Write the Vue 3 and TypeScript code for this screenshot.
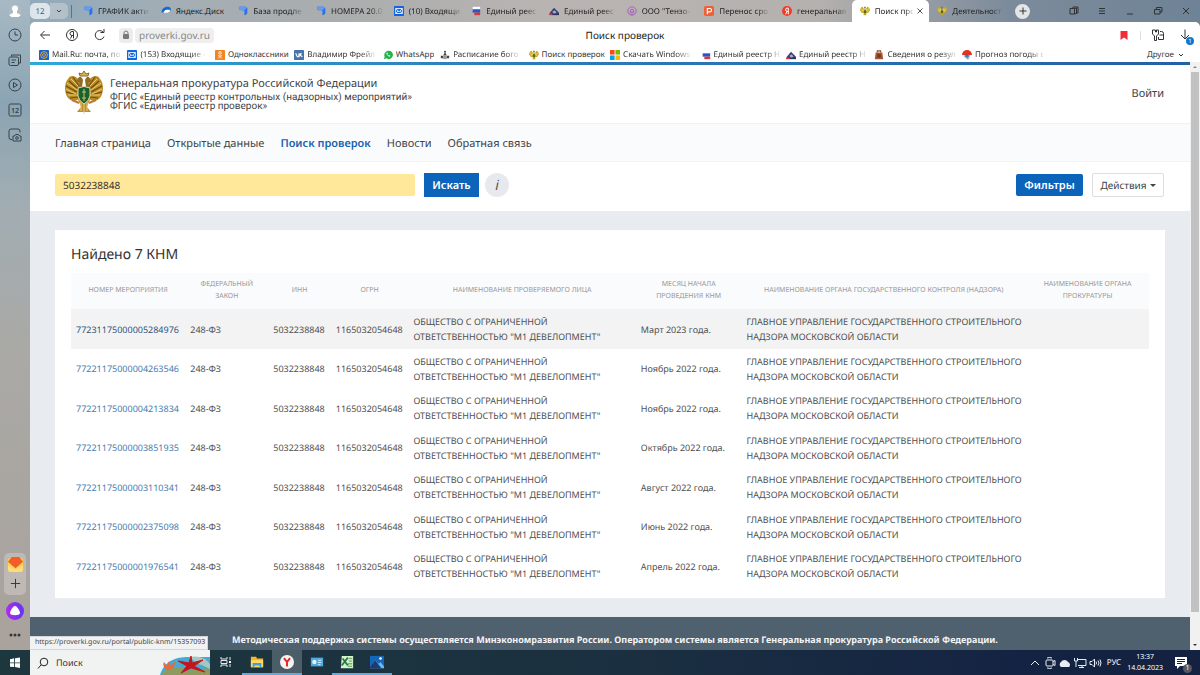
<script setup lang="ts">
import { ref } from 'vue'

interface Tab { title: string; icon: string; active?: boolean; whole?: boolean }
interface Inspection { id: string; month: string }

const tabs: Tab[] = [
  { title: 'ГРАФИК акти', icon: 'doc' },
  { title: 'Яндекс.Диск', icon: 'disk', whole: true },
  { title: 'База продле', icon: 'doc' },
  { title: 'НОМЕРА 20.0', icon: 'doc' },
  { title: '(10) Входящи', icon: 'mail' },
  { title: 'Единый реес', icon: 'flag' },
  { title: 'Единый реес', icon: 'house' },
  { title: 'ООО "Тензо-', icon: 'podcast' },
  { title: 'Перенос сро', icon: 'letter-p' },
  { title: 'генеральная', icon: 'yandex' },
  { title: 'Поиск про', icon: 'crest', active: true },
  { title: 'Деятельност', icon: 'crest' },
]

const bookmarks: Tab[] = [
  { title: 'Mail.Ru: почта, по', icon: 'at' },
  { title: '(153) Входящие -', icon: 'mail' },
  { title: 'Одноклассники', icon: 'ok', whole: true },
  { title: 'Владимир Фрейл', icon: 'vk' },
  { title: 'WhatsApp', icon: 'whatsapp', whole: true },
  { title: 'Расписание бого', icon: 'church' },
  { title: 'Поиск проверок', icon: 'crest', whole: true },
  { title: 'Скачать Windows', icon: 'windows' },
  { title: 'Единый реестр Н', icon: 'flag' },
  { title: 'Единый реестр Н', icon: 'house' },
  { title: 'Сведения о резул', icon: 'bag' },
  { title: 'Прогноз погоды в', icon: 'umbrella' },
]

const sideTools = [
  { label: 'История', icon: 'clock' },
  { label: 'Коллекции', icon: 'notes' },
  { label: 'Видео', icon: 'play' },
  { label: 'Вкладки', icon: 'twelve' },
  { label: 'Скриншот', icon: 'camera' },
]

const windowTools = [
  { label: 'Панели', icon: 'panels' },
  { label: 'Меню', icon: 'menu' },
  { label: 'Свернуть', icon: 'minimize' },
  { label: 'Развернуть', icon: 'restore' },
  { label: 'Закрыть', icon: 'close' },
]

const menu = ['Главная страница', 'Открытые данные', 'Поиск проверок', 'Новости', 'Обратная связь']

const columns = [
  'Номер мероприятия', 'Федеральный закон', 'ИНН', 'ОГРН', 'Наименование проверяемого лица',
  'Месяц начала проведения КНМ', 'Наименование органа государственного контроля (надзора)',
  'Наименование органа прокуратуры',
]

const inspections: Inspection[] = [
  { id: '77231175000005284976', month: 'Март 2023 года.' },
  { id: '77221175000004263546', month: 'Ноябрь 2022 года.' },
  { id: '77221175000004213834', month: 'Ноябрь 2022 года.' },
  { id: '77221175000003851935', month: 'Октябрь 2022 года.' },
  { id: '77221175000003110341', month: 'Август 2022 года.' },
  { id: '77221175000002375098', month: 'Июнь 2022 года.' },
  { id: '77221175000001976541', month: 'Апрель 2022 года.' },
]

const apps = [
  { label: 'Проводник', icon: 'folder', state: 'open' },
  { label: 'Яндекс.Браузер', icon: 'ybrowser', state: 'open current' },
  { label: 'Панель управления', icon: 'control', state: '' },
  { label: 'Excel', icon: 'excel', state: 'open' },
  { label: 'Фотографии', icon: 'photos', state: 'open' },
]

const query = ref('5032238848')
</script>

<template>
  <div class="desktop">
    <svg class="sprite" aria-hidden="true">
      <symbol id="doc" viewBox="0 0 12 12"><path d="M1 2q0-1 1-1h7q2 0 2 2v6l-3 2V5H4Q1 5 1 2z" fill="#1e5fe0" /><path d="M1 2q0-1 1-1h7q1 0 2 1L8 5H4Q1 5 1 2z" fill="#5f9cf8" /><path d="M8 5l3-3v7l-3 2z" fill="#2a72ee" /></symbol>
      <symbol id="disk" viewBox="0 0 12 12"><path d="M1 8C0 4 4 1 8 1c3 0 4 2 4 4z" fill="#1668d8" /><path d="M3 8c1-3 4-5 7-4 2 1 0 4-3 4z" fill="#fff" /><path d="M4 5c2-2 6-2 7 0-2-1-5-1-7 0z" fill="#263645" /></symbol>
      <symbol id="mail" viewBox="0 0 12 12"><rect width="12" height="12" rx="1" fill="#1464e0" /><path d="M2 3h8v6H2zM2 3l4 4 4-4M2 9l3-3M10 9 7 6" fill="none" stroke="#fff" /></symbol>
      <symbol id="flag" viewBox="0 0 12 12"><path d="M2 1h9v3H2z" fill="#fff" /><path d="M2 4h9v4H2z" fill="#2354d4" /><path d="M4 8h7v3H4z" fill="#e2322e" /></symbol>
      <symbol id="house" viewBox="0 0 12 12"><path d="m1 8 5-6 6 6v2H1z" fill="#3d3d74" /><path d="m4 7 3-2 2 3-3 2z" fill="#a9aac8" /><path d="M0 9h4v2H0z" fill="#d53b36" /><path d="M4 9h8v2H4z" fill="#293661" /></symbol>
      <symbol id="podcast" viewBox="0 0 12 12"><g fill="none" stroke="#a651c5"><circle cx="6" cy="6" r="5" /><path d="M4 9V6a2 2 0 0 1 4 0v3M6 6v5" /></g></symbol>
      <symbol id="letter-p" viewBox="0 0 12 12"><rect width="12" height="12" rx="2" fill="#ef6036" /><path d="M4 10V3h3a2 2 0 0 1 0 4H4" fill="none" stroke="#fff" stroke-width="1.300" /></symbol>
      <symbol id="yandex" viewBox="0 0 12 12"><circle cx="6" cy="6" r="6" fill="#f33c25" /><path d="M7.500 10V2.500H6.300a2 2 0 0 0 0 4h1.200M6.200 6.500 4.300 10" fill="none" stroke="#fff" stroke-width="1.200" /></symbol>
      <symbol id="crest" viewBox="0 0 12 12"><path d="M5 4 3 1 1 2 0 5l2 3 3 1-1 2h4L7 9l3-1 2-3-1-3-2-1-2 3z" fill="#c2a52a" /><path d="M2 3l1 4M10 3 9 7M4 3v3M8 3v3" stroke="#f2db5b" /><path d="M5 1h2v2H5z" fill="#8a7626" /><path d="M5 5h2v3L6 9 5 8z" fill="#3c5f2b" /></symbol>
      <symbol id="at" viewBox="0 0 12 12"><rect width="12" height="12" rx="1" fill="#1862c8" /><circle cx="6" cy="6" r="4" fill="none" stroke="#eca530" stroke-width="1.200" /><circle cx="6" cy="6" r="1.700" fill="none" stroke="#eca530" /></symbol>
      <symbol id="ok" viewBox="0 0 12 12"><rect width="12" height="12" rx="1" fill="#f28421" /><circle cx="6" cy="3.500" r="1.600" fill="none" stroke="#fff" /><path d="M3.500 6.500c1.500 1 3.500 1 5 0M6 7.500l-2 2.500M6 7.500 8 10" stroke="#fff" fill="none" /></symbol>
      <symbol id="vk" viewBox="0 0 12 12"><rect width="12" height="12" rx="1" fill="#4775ab" /><path d="m2 4 2 4h2V4v2l3-2-2 2 3 2" fill="none" stroke="#fff" stroke-width="1.400" /></symbol>
      <symbol id="whatsapp" viewBox="0 0 12 12"><path d="M6 1a5 5 0 1 1-2 9l-3 1 1-3A5 5 0 0 1 6 1z" fill="#24b34b" /><path d="M4 4c0 2 2 4 4 4l1-1-2-1-1 1-1-2 1-1-1-1z" fill="#fff" /></symbol>
      <symbol id="church" viewBox="0 0 12 12"><path d="M6 1v3M5 2h2" stroke="#222" /><path d="m6 3 2 3H4zM1 7h3v3H1zM8 7h3v3H8z" fill="#444" /><path d="M4 6h4v5H4z" fill="#999" /></symbol>
      <symbol id="windows" viewBox="0 0 12 12"><path d="M0 0h5.500v5.500H0z" fill="#f14f21" /><path d="M6.500 0H12v5.500H6.500z" fill="#7db901" /><path d="M0 6.500h5.500V12H0z" fill="#00a3ee" /><path d="M6.500 6.500H12V12H6.500z" fill="#feb800" /></symbol>
      <symbol id="bag" viewBox="0 0 12 12"><path d="M4 3V1h4v2" fill="none" stroke="#8d4b30" stroke-width="1.300" /><path d="M2 3h8l1 8H1z" fill="#a65535" /><path d="M4 5h4v4H4z" fill="#753620" /></symbol>
      <symbol id="umbrella" viewBox="0 0 12 12"><path d="M0 6a6 6 0 0 1 12 0z" fill="#e7311f" /><path d="M3 6h6v3H3z" fill="#4f91c9" /><path d="M6 5v5c0 1 2 1 2 0" fill="none" stroke="#355c79" /></symbol>

      <symbol id="clock" viewBox="0 0 14 14"><circle cx="7" cy="7" r="6" /><path d="M7 3.500V7h3" /></symbol>
      <symbol id="notes" viewBox="0 0 14 14"><path d="M3.500 3.500V2h9v8H11" /><rect x="1" y="4" width="9.500" height="8.500" rx="1.500" /><path d="M3.500 7h4.500M3.500 9.500h3" /></symbol>
      <symbol id="play" viewBox="0 0 14 14"><circle cx="7" cy="7" r="6" /><path d="m5.500 4.500 4 2.500-4 2.500z" /></symbol>
      <symbol id="twelve" viewBox="0 0 14 14"><rect x="1" y="1" width="12" height="12" rx="1.500" /><text x="7" y="9.500" text-anchor="middle" class="glyph-text">12</text></symbol>
      <symbol id="camera" viewBox="0 0 14 14"><path d="M4 11.500H3a2 2 0 0 1-2-2V3a2 2 0 0 1 2-2h7a2 2 0 0 1 2 2v1.500" /><path d="M5 8h1.500l1-1.500h3l1 1.500H13v5H5z" /><circle cx="9" cy="10" r="1.300" /></symbol>

      <symbol id="panels" viewBox="0 0 12 12"><path d="M5 3V2h5v6H8.500M2 3.500h4.500V9H2zM6.500 3.500l2-.500v5.500l-2 .500" /></symbol>
      <symbol id="menu" viewBox="0 0 12 12"><path d="M3 3.500h6M3 6h6M3 8.500h6" /></symbol>
      <symbol id="minimize" viewBox="0 0 12 12"><path d="M3 9h6" /></symbol>
      <symbol id="restore" viewBox="0 0 12 12"><path d="M4.500 4.500v-2H10V7H8M2.500 4.500H8V9H2.500z" /></symbol>
      <symbol id="close" viewBox="0 0 12 12"><path d="m3 3 6 6M9 3 3 9" /></symbol>

      <symbol id="folder" viewBox="0 0 16 16"><path d="M1 2h6l1 2h7v10H1z" fill="#f3b633" /><path d="M1 6h14v8H1z" fill="#ffd968" /><path d="M3 9h10v5h-2v-2H5v2H3z" fill="#3c9fdf" /></symbol>
      <symbol id="ybrowser" viewBox="0 0 16 16"><circle cx="8" cy="8" r="8" fill="#f4f4f6" /><path d="m4.500 3.500 3.500 4.500 3.500-4.500M8 8v5" fill="none" stroke="#e52620" stroke-width="2.200" /></symbol>
      <symbol id="control" viewBox="0 0 16 16"><rect x="1" y="3" width="14" height="10" fill="#48abe2" /><circle cx="5" cy="8" r="2.500" fill="#e3f3fb" /><path d="M9 6h4M9 8.500h4M9 11h3" stroke="#e3f3fb" /></symbol>
      <symbol id="excel" viewBox="0 0 16 16"><path d="M2 1h13v14H1z" fill="#d9efd0" /><path d="M10 4h4M10 7h4M9 10h5M9 13h5" stroke="#6fb765" stroke-width="1.500" /><path d="m3 4 6 8M9 3l-7 9" stroke="#217b3a" stroke-width="2" /></symbol>
      <symbol id="photos" viewBox="0 0 16 16"><path d="M0 1h16v14H0z" fill="#1666b8" /><path d="m0 13 6-7 4 4 2-2 4 5v2H0z" fill="#65b9f2" /><path d="m6 6 7 9H0v-2z" fill="#1f3b70" /><circle cx="12" cy="4" r="1.500" fill="#fff" /></symbol>
    </svg>

    <div class="browser">
      <aside class="side">
        <button class="avatar" aria-label="Профиль">
          <svg viewBox="0 0 14 14"><path d="M1 1h12v12H1z" fill="#aeb9c0" /><circle cx="7" cy="4.500" r="3" fill="#fff" /><path d="M5 6h4v3l4 2v2H1v-2l4-2z" fill="#fff" /></svg>
        </button>
        <button v-for="tool in sideTools" :key="tool.icon" class="side-tool" :aria-label="tool.label">
          <svg class="line"><use :href="'#' + tool.icon" /></svg>
        </button>
        <div class="side-end">
          <div class="side-box">
            <button class="side-small" aria-label="Почта">
              <svg viewBox="0 0 16 16"><rect y="1" width="16" height="15" rx="3" fill="#ffcd54" /><path d="M0 5 4 0h8l4 5-8 7z" fill="#f45d27" /><path d="M0 8l8 5 8-5v5a3 3 0 0 1-3 3H3a3 3 0 0 1-3-3z" fill="#ffdc78" /></svg>
            </button>
            <button class="side-small" aria-label="Добавить"><svg class="line dark" viewBox="0 0 16 16"><path d="M8 3v10M3 8h10" /></svg></button>
          </div>
          <button class="alice" aria-label="Алиса">
            <svg viewBox="0 0 18 18"><defs><linearGradient id="alice-fill"><stop stop-color="#b02aef" /><stop offset="1" stop-color="#6137ef" /></linearGradient></defs><circle cx="9" cy="9" r="9" fill="url(#alice-fill)" /><path d="M9 4c2 0 5 5 5 7 0 3-10 3-10 0 0-2 3-7 5-7z" fill="#fff" /></svg>
          </button>
          <button class="dots" aria-label="Ещё"><svg viewBox="0 0 14 6"><g fill="#393634"><circle cx="3" cy="3" r="1.500" /><circle cx="7" cy="3" r="1.500" /><circle cx="11" cy="3" r="1.500" /></g></svg></button>
        </div>
      </aside>

      <div class="frame">
        <div class="tabbar">
          <div class="groups">
            <button class="count">12</button>
            <button class="group-arrow" aria-label="Список вкладок"><svg class="line" viewBox="0 0 10 10"><path d="m3 4 2 2 2-2" /></svg></button>
          </div>
          <div class="tabs">
            <div v-for="(tab, i) in tabs" :key="i" class="tab" :class="{ active: tab.active }">
              <svg class="fav"><use :href="'#' + tab.icon" /></svg>
              <span class="clip" :class="{ fade: !tab.whole }">{{ tab.title }}</span>
              <button v-if="tab.active" class="tab-close" aria-label="Закрыть вкладку"><svg class="line dark"><use href="#close" /></svg></button>
            </div>
          </div>
          <button class="new-tab" aria-label="Новая вкладка"><svg class="line dark" viewBox="0 0 14 14"><path d="M7 3.500v7M3.500 7h7" /></svg></button>
          <div class="window-tools">
            <button v-for="tool in windowTools" :key="tool.icon" :aria-label="tool.label"><svg class="line dark"><use :href="'#' + tool.icon" /></svg></button>
          </div>
        </div>

        <div class="chrome">
          <div class="toolbar">
            <div class="tools">
              <button aria-label="Назад"><svg class="line dark" viewBox="0 0 14 14"><path d="M12 7H3M6.500 3 2.500 7l4 4" /></svg></button>
              <button aria-label="Яндекс"><svg class="line dark" viewBox="0 0 14 14"><circle cx="7" cy="7" r="5.500" /><path d="M8.500 10.500v-7H7a2 2 0 0 0 0 4h1.500M7 7.500l-1.500 3" /></svg></button>
              <button aria-label="Обновить"><svg class="line dark" viewBox="0 0 14 14"><path d="M12 8.500A4.500 4.500 0 1 1 11 4M8.500 4.500H12V1" /></svg></button>
            </div>
            <span class="lock"><svg viewBox="0 0 14 14"><rect x="4" y="6" width="6" height="5" rx="1" fill="#77797b" /><path d="M5 6V5a2 2 0 0 1 4 0v1" fill="none" stroke="#77797b" /></svg></span>
            <a class="host" href="#">proverki.gov.ru</a>
            <span class="page-title">Поиск проверок</span>
            <div class="tools-end">
              <button aria-label="Закладка"><svg viewBox="0 0 14 14"><path d="M3.500 3h7v9L7 9.500 3.500 12z" fill="#f52c37" /></svg></button>
              <span class="sep"></span>
              <button aria-label="Расширения"><svg class="line dark" viewBox="0 0 14 14"><path d="M1.500 2h3v2h1V2h2v4L5.500 8v4.500h-2V8l-2-2zM9 3.500h1.500q2 0 2 2v6H7.500V9M8.500 7h4" /></svg></button>
              <button class="download" aria-label="Загрузки"><svg class="line dark" viewBox="0 0 14 14"><path d="M6 1.500v9M2 7l4 4 4-4" /></svg><span class="badge">1</span></button>
            </div>
          </div>
          <div class="bookmarks">
            <nav class="marks" aria-label="Закладки">
              <a v-for="(mark, i) in bookmarks" :key="i" href="#" class="mark"><svg class="fav"><use :href="'#' + mark.icon" /></svg><span class="clip" :class="{ fade: !mark.whole }">{{ mark.title }}</span></a>
            </nav>
            <button class="other">Другое <svg class="line dark" viewBox="0 0 10 10"><path d="m3 4 2 2 2-2" /></svg></button>
          </div>
        </div>

        <div class="viewport">
          <div class="page">
            <header class="head">
              <svg class="emblem" viewBox="0 0 40 44" aria-hidden="true">
                <path d="M17 12C13 4 6 3 4 8 0 12 0 22 4 27c4 4 8 3 11 1zM23 12c4-8 11-9 13-4 4 4 4 14 0 19-4 4-8 3-11 1z" fill="#b98c26" />
                <path d="M5 10l9 8M2 15l11 6M2 21l11 3M6 27l8-1M9 6l6 9M35 10l-9 8M38 15l-11 6M38 21l-11 3M34 27l-8-1M31 6l-6 9" stroke="#714c12" stroke-width="1.200" />
                <path d="M7 8l8 8M3 12l10 7M2 18l10 5M4 24h10M33 8l-8 8M37 12l-10 7M38 18l-10 5M36 24H26" stroke="#efd06f" />
                <path d="M14 28h12l-3 8 4 5H13l4-5z" fill="#b98d32" /><path d="M17 30v10M20 31v12M23 30v10" stroke="#ecd17c" />
                <path d="M14 8c1-4 4-2 5 1l-1 7h-4l2-4-4-2zM26 8c-1-4-4-2-5 1l1 7h4l-2-4 4-2z" fill="#916c22" />
                <path d="m16 5-1-3 3 1 2-3 2 3 3-1-1 3z" fill="#d8b557" stroke="#8a6a27" />
                <path d="M14 17q6-3 12 0v8q-1 5-6 8-5-3-6-8z" fill="#176230" stroke="#e5d9a0" />
                <path d="M20 18v12M18 21h4M18 27h4" stroke="#d8c05b" /><path d="M8 29l7 3M32 29l-7 3" stroke="#b77b2c" stroke-width="2" />
              </svg>
              <div class="brand">
                <h1>Генеральная прокуратура Российской Федерации</h1>
                <p>ФГИС «Единый реестр контрольных (надзорных) мероприятий»</p>
                <p>ФГИС «Единый реестр проверок»</p>
              </div>
              <a href="#" class="login">Войти</a>
            </header>
            <nav class="menu">
              <a v-for="item in menu" :key="item" href="#" :class="{ current: item === 'Поиск проверок' }">{{ item }}</a>
            </nav>
            <form class="search" @submit.prevent>
              <input v-model="query" type="text" aria-label="Поисковый запрос" />
              <button class="find" type="submit">Искать</button>
              <button class="info" type="button" aria-label="Справка">i</button>
              <span class="grow"></span>
              <button class="filters" type="button">Фильтры</button>
              <button class="actions" type="button">Действия <i class="caret"></i></button>
            </form>
            <main class="content">
              <section class="card">
                <h2>Найдено 7 КНМ</h2>
                <table>
                  <colgroup><col v-for="n in 8" :key="n" :class="'c' + n" /></colgroup>
                  <thead><tr><th v-for="name in columns" :key="name" scope="col">{{ name }}</th></tr></thead>
                  <tbody>
                    <tr v-for="row in inspections" :key="row.id">
                      <td><a href="#">{{ row.id }}</a></td>
                      <td>248-ФЗ</td>
                      <td>5032238848</td>
                      <td>1165032054648</td>
                      <td>ОБЩЕСТВО С ОГРАНИЧЕННОЙ<br />ОТВЕТСТВЕННОСТЬЮ "М1 ДЕВЕЛОПМЕНТ"</td>
                      <td>{{ row.month }}</td>
                      <td>ГЛАВНОЕ УПРАВЛЕНИЕ ГОСУДАРСТВЕННОГО СТРОИТЕЛЬНОГО<br />НАДЗОРА МОСКОВСКОЙ ОБЛАСТИ</td>
                      <td></td>
                    </tr>
                  </tbody>
                </table>
              </section>
            </main>
            <footer class="foot">Методическая поддержка системы осуществляется Минэкономразвития России. Оператором системы является Генеральная прокуратура Российской Федерации.</footer>
          </div>
          <div class="scrollbar" aria-hidden="true">
            <svg viewBox="0 0 10 10"><path d="m3 6 2-2 2 2z" fill="#888" /></svg>
            <span class="thumb"></span>
            <svg viewBox="0 0 10 10"><path d="m3 4 2 2 2-2z" fill="#333" /></svg>
          </div>
          <div class="status">https://proverki.gov.ru/portal/public-knm/15357093</div>
        </div>
      </div>
    </div>

    <div class="taskbar">
      <button class="start" aria-label="Пуск"><svg viewBox="0 0 12 12"><path d="M0 2l5-1v5H0zM6 1l6-1v6H6zM0 7h5v4.500L0 11zM6 7h6v5.500L6 11.500z" fill="#fff" /></svg></button>
      <button class="find-box">
        <svg class="loupe" viewBox="0 0 12 12"><circle cx="7" cy="5" r="3.800" /><path d="m4 8-3 3.500" /></svg>
        <span>Поиск</span>
        <svg class="reef" viewBox="0 0 50 20"><path d="M0 20C4 6 16 2 28 2h22v18z" fill="#48a9d3" /><path d="M2 20c5-8 14-10 22-6s18-2 26 0v6z" fill="#8f9b5e" /><path d="M30 2c8-2 16 1 20 7v5c-8-5-14-4-20-12z" fill="#a4c7c2" /><path d="M6 14c-3-3-3-5-2-7l3 4 2-5 2 5 4-5c0 5-2 8-6 9z" fill="#e9693c" /><path d="m31 1 1 7 11-3-9 6 11 6-14-4-10 5 6-7-9-5 11 2z" fill="#c3161c" stroke="#c3161c" stroke-linejoin="round" /></svg>
      </button>
      <button class="app task-view" aria-label="Представление задач"><svg viewBox="0 0 14 14"><path d="M2 2v2h6V2M2 12v-2h6v2M2 5.500h6v3H2zM11 2v3M11 9v3" fill="none" stroke="#e5eaec" /><path d="M10 6h2v2h-2z" fill="#fff" /></svg></button>
      <button v-for="app in apps" :key="app.icon" class="app" :class="app.state" :aria-label="app.label"><svg><use :href="'#' + app.icon" /></svg></button>
      <span class="grow"></span>
      <div class="tray">
        <svg class="light" viewBox="0 0 14 14"><path d="m3 9 4-4 4 4" /></svg>
        <svg class="light" viewBox="0 0 14 14"><rect x="3" y="4" width="7" height="6" rx="1" /><path d="M10 5.500l2-1v5l-2-1M4 2q3-1 5 0M4 12q3 1 5 0" /></svg>
        <svg viewBox="0 0 14 14"><path d="M3 11a3 3 0 0 1 0-5 4 4 0 0 1 7 0 3 3 0 0 1 1 5z" fill="#e8edf4" /></svg>
        <svg class="light" viewBox="0 0 14 14"><path d="M5 3.500h8v6H5M9 9.500v2M6 11.500h5M1.500 2v3h3V2M3 5v6" /></svg>
        <svg class="light" viewBox="0 0 14 14"><path d="M2 5.500h2L6.500 3v8L4 8.500H2zM8 5.500q1 1.500 0 3M10 4.500q2 2.500 0 5M12 3.500q2 3.500 0 7" /></svg>
        <span class="lang">РУС</span>
        <time class="time">13:37<br />14.04.2023</time>
        <button class="notice" aria-label="Уведомления"><svg viewBox="0 0 14 14"><path d="M1 1h12v9H6l-3 3v-3H1z" fill="#fff" /><path d="M3 3.500h8M3 5.500h8M3 7.500h5" stroke="#14223d" /></svg><span>1</span></button>
      </div>
    </div>
  </div>
</template>

<style>
body { margin: 0; }
</style>

<style scoped>
.desktop { display: flex; flex-direction: column; min-height: 100vh; font-family: "Noto Sans", "Open Sans", sans-serif; color: #404448; text-rendering: geometricPrecision; }
* { box-sizing: border-box; }
button { border: 0; padding: 0; margin: 0; background: none; font: inherit; color: inherit; text-rendering: inherit; display: flex; align-items: center; justify-content: center; }
a { color: inherit; text-decoration: none; }
svg { display: block; flex: none; }
.sprite { position: absolute; width: 0; height: 0; }
.line { fill: none; stroke: #34434c; stroke-width: 1; }
.dark { stroke: #333; }
.glyph-text { font: 600 7px "Noto Sans", sans-serif; fill: #34434c; stroke: none; }
.grow { flex: 1; }

.browser { display: flex; flex: 1; background: linear-gradient(90deg, #8da9bc 0, #a5aeb4 16%, #aaadae 28%, #b9b4b1 46%, #b5b1ae 68%, #7c8b9b 84%, #6e8396 100%); }
.side { width: 30px; display: flex; flex-direction: column; align-items: center; background: linear-gradient(#a7b9c4 0, #8ba4b3 16%, #a2adb2 32%, #aaa9a5 55%, #a9a29d 100%); }
.side svg { width: 14px; height: 14px; }
.avatar { width: 18px; height: 22px; }
.avatar svg { border-radius: 7px; }
.side-tool { width: 30px; height: 25px; }
.side-end { margin-top: auto; display: flex; flex-direction: column; align-items: center; }
.side-box { width: 22px; border-radius: 5px; background: #beb9b5; padding: 2px 0; margin-bottom: 7px; }
.side-small { width: 22px; height: 19px; }
.side .side-small svg { width: 15px; height: 15px; }
.side .alice svg { width: 18px; height: 18px; }
.dots { width: 30px; height: 30px; }

.frame { flex: 1; min-width: 0; display: flex; flex-direction: column; }
.tabbar { height: 22px; display: flex; align-items: center; font-size: 8px; color: #222; }
.groups { width: 45px; display: flex; align-items: center; }
.count { width: 20px; height: 16px; background: #dce5ea; border-radius: 5px; color: #555; }
.group-arrow { width: 18px; height: 16px; background: #b3c0c8; border-radius: 0 5px 5px 0; }
.group-arrow svg { width: 10px; height: 10px; }
.groups::after { content: ""; width: 1px; height: 13px; margin-left: 3px; background: #62727c; }
.tabs { flex: 933; display: grid; grid-template-columns: repeat(12, minmax(0, 1fr)); height: 22px; }
.tab { display: flex; align-items: center; gap: 5px; padding: 0 3px 0 8px; min-width: 0; }
.tab.active { background: #fff; border-radius: 5px 5px 0 0; padding-right: 4px; }
.active .clip { flex: 1; }
.tab-close { margin-left: -3px; }
.tab-close svg { width: 10px; height: 10px; }
.fav { width: 10px; height: 10px; }
.clip { min-width: 0; overflow: hidden; white-space: nowrap; }
.fade { mask-image: linear-gradient(90deg, #000 78%, rgba(0, 0, 0, 0.15)); }
.new-tab { width: 15px; height: 15px; border-radius: 50%; background: #e3e5e7; margin-left: 8px; }
.new-tab svg { width: 14px; height: 14px; }
.window-tools { margin-left: 30px; display: flex; }
.window-tools button { width: 28px; height: 22px; }
.window-tools svg { width: 12px; height: 12px; }

.chrome { background: #fff; border-radius: 5px 5px 0 0; }
.toolbar { height: 26px; display: flex; align-items: center; position: relative; }
.tools { display: flex; padding-left: 8px; }
.tools button { width: 14px; height: 20px; margin-right: 13px; }
.tools svg, .lock svg, .tools-end svg { width: 14px; height: 14px; }
.lock { background: #ececec; border-radius: 4px; height: 15px; }
.host { font-size: 10px; line-height: 15px; background: #efefef; color: #888; border-radius: 4px; padding: 0 4px; margin-left: 2px; }
.page-title { position: absolute; left: 0; right: 0; text-align: center; pointer-events: none; font-size: 10px; color: #222; padding-left: 20px; }
.tools-end { margin-left: auto; display: flex; align-items: center; padding-right: 7px; }
.sep { width: 1px; height: 9px; background: #ddd; margin: 0 10px 0 9px; }
.download { margin-left: 14px; position: relative; }
.badge { position: absolute; right: -1px; bottom: -3px; width: 8px; height: 8px; border-radius: 50%; background: #0a78d4; color: #fff; font-size: 6px; line-height: 8px; }
.bookmarks { height: 14px; display: flex; align-items: center; padding-left: 9px; font-size: 8px; color: #333; }
.marks { flex: 1; display: grid; grid-template-columns: 88fr 87fr 79fr 88fr 57fr 88fr 81fr 90fr 85fr 88fr 87fr 84fr 100fr; }
.mark { display: flex; align-items: center; gap: 3px; padding-right: 3px; min-width: 0; line-height: 14px; }
.other { margin-right: 14px; gap: 2px; line-height: 14px; }
.other svg { width: 10px; height: 10px; }

.viewport { flex: 1; display: flex; position: relative; background: #f1f1f1; }
.page { flex: 1; min-width: 0; display: flex; flex-direction: column; background: #fff; border-top: 3px solid; border-image: linear-gradient(90deg, #2ba9d9, #2c7eb9 40%, #2460a5) 1; }
.head { display: flex; height: 59px; padding: 6px 26px 0 34px; border-bottom: 1px solid #f0f1f3; }
.emblem { width: 40px; height: 44px; }
.brand { padding: 5px 0 0 6px; flex: 1; }
.brand h1 { margin: 0 0 1px; font-size: 11px; line-height: 16px; font-weight: 400; }
.brand p { margin: 0; font-family: Roboto, "Noto Sans", sans-serif; font-size: 10px; line-height: 9px; }
.login { font-size: 11px; line-height: 16px; padding-top: 15px; }
.menu { height: 38px; background: #fafbfd; display: flex; align-items: center; gap: 16px; padding: 2px 25px 0; font-size: 11px; border-bottom: 1px solid #f2f3f5; }
.menu .current { color: #1b62ae; font-weight: 600; }
.search { height: 49px; display: flex; align-items: center; padding: 0 26px 3px 25px; font-size: 11px; }
.search input { width: 360px; height: 22px; border: 0; border-radius: 2px; background: #ffe899; padding: 0 8px; font: inherit; font-size: 10px; color: #333; text-rendering: inherit; }
.find { width: 55px; height: 24px; margin-left: 9px; background: #0b63ba; color: #fff; font-weight: 600; }
.info { width: 24px; height: 24px; margin-left: 6px; border-radius: 50%; background: #e8e9ee; font-size: 14px; font-style: italic; color: #555; }
.filters { width: 67px; height: 22px; border-radius: 2px; background: #0b63ba; color: #fff; font-weight: 600; }
.actions { width: 72px; height: 24px; margin-left: 9px; border: 1px solid #ddd; border-radius: 2px; font-size: 10px; gap: 3px; }
.caret { border: 3px solid transparent; border-top-color: #444; border-bottom: 0; }
.content { flex: 1; background: #e8ebf0; padding: 19px 25px; }
.card { background: #fff; padding: 15px 16px 12px; }
.card h2 { margin: 0 0 9px; font-size: 14px; line-height: 19px; font-weight: 400; color: #333; }
table { width: 100%; table-layout: fixed; border-collapse: collapse; font-size: 9px; line-height: 15px; color: #505050; }
.c1 { width: 10.6%; } .c2 { width: 7.7%; } .c3 { width: 5.8%; } .c4 { width: 7.2%; }
.c5 { width: 21.1%; } .c6 { width: 9.8%; } .c7 { width: 26.4%; } .c8 { width: 11.4%; }
th { height: 36px; padding: 0 12px; background: #fafbfd; color: #999; font-size: 7px; line-height: 12px; font-weight: 400; text-transform: uppercase; }
td { height: 40px; padding: 0 5px; white-space: nowrap; }
tbody tr:nth-child(even) td { height: 39px; }
tbody tr:first-child { background: #f3f3f3; }
td a { color: #477cb0; }
tbody tr:first-child a { color: #2d557f; }
.foot { height: 33px; background: #4f606f; color: #f3f5f7; font-size: 9px; font-weight: 700; line-height: 46px; text-align: center; padding-left: 10px; white-space: nowrap; overflow: hidden; }
.scrollbar { width: 10px; display: flex; flex-direction: column; }
.scrollbar svg { width: 10px; height: 10px; }
.thumb { flex: 1; background: #c1c1c1; margin: 0 1px 28px; }
.status { position: absolute; left: 0; bottom: 0; height: 14px; background: #f1f2f3; border: 1px solid #d3d5d8; border-left: 0; padding: 0 2px 0 5px; font-size: 7px; line-height: 12px; color: #444; }

.taskbar { height: 25px; display: flex; background: linear-gradient(90deg, #1d373e, #1b3040 50%, #142343 85%, #142140); color: #fff; }
.start { width: 30px; }
.start svg { width: 10px; height: 11px; }
.find-box { width: 180px; background: #f1f2f2; justify-content: flex-start; padding-left: 7px; gap: 7px; font-size: 9px; color: #333; }
.loupe { width: 12px; height: 12px; fill: none; stroke: #222; stroke-width: 1; }
.reef { width: 50px; height: 20px; margin-left: auto; align-self: flex-end; }
.app { width: 30px; border-bottom: 2px solid transparent; }
.task-view { width: 32px; }
.app svg { width: 14px; height: 14px; }
.app.open { border-bottom-color: #63a9dc; }
.app.current { background: #4b5e67; }
.tray { display: flex; align-items: center; gap: 1px; padding-right: 11px; }
.tray svg { width: 14px; height: 14px; }
.light { fill: none; stroke: #e8edf4; stroke-width: 1; }
.lang { font-size: 8px; margin: 0 5px 0 4px; }
.time { font-size: 7px; line-height: 11px; text-align: center; }
.notice { position: relative; width: 16px; height: 20px; margin-left: 9px; }
.notice span { position: absolute; right: -3px; bottom: 0; width: 9px; height: 9px; border-radius: 50%; background: #55585e; color: #fff; font-size: 7px; line-height: 9px; }
</style>
